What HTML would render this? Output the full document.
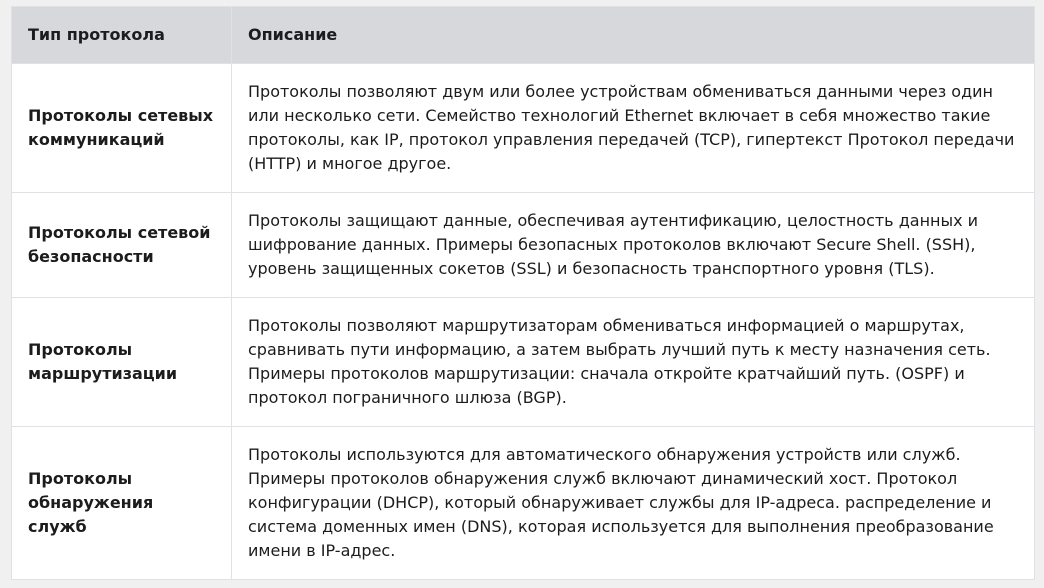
<!DOCTYPE html>
<html><head><meta charset="utf-8"><style>
html,body{margin:0;padding:0;background:#f0f0f0;width:1044px;height:588px;overflow:hidden}
table{position:absolute;left:11px;top:6px;width:1024px;border-collapse:collapse;background:#fff;font-family:"DejaVu Sans","Liberation Sans",sans-serif;font-size:16px;line-height:24px;color:#1c1c1e;table-layout:fixed}
td,th{border:1px solid #e0e1e4;padding:16px 10px 16px 16px;text-align:left;vertical-align:middle;white-space:nowrap;overflow:visible}
th{background:#d7d8dc;font-weight:bold;height:24px;font-size:16px}
td:first-child{font-weight:bold;font-size:16px}
td:last-child{vertical-align:top}
</style></head><body>
<table>
<colgroup><col style="width:220px"><col></colgroup>
<tr><th>Тип протокола</th><th>Описание</th></tr>
<tr style="height:129px"><td>Протоколы сетевых<br>коммуникаций</td><td>Протоколы позволяют двум или более устройствам обмениваться данными через один<br>или несколько сети. Семейство технологий Ethernet включает в себя множество такие<br>протоколы, как IP, протокол управления передачей (TCP), гипертекст Протокол передачи<br>(HTTP) и многое другое.</td></tr>
<tr style="height:105px"><td>Протоколы сетевой<br>безопасности</td><td>Протоколы защищают данные, обеспечивая аутентификацию, целостность данных и<br>шифрование данных. Примеры безопасных протоколов включают Secure Shell. (SSH),<br>уровень защищенных сокетов (SSL) и безопасность транспортного уровня (TLS).</td></tr>
<tr style="height:129px"><td>Протоколы<br>маршрутизации</td><td>Протоколы позволяют маршрутизаторам обмениваться информацией о маршрутах,<br>сравнивать пути информацию, а затем выбрать лучший путь к месту назначения сеть.<br>Примеры протоколов маршрутизации: сначала откройте кратчайший путь. (OSPF) и<br>протокол пограничного шлюза (BGP).</td></tr>
<tr style="height:153px"><td>Протоколы<br>обнаружения<br>служб</td><td>Протоколы используются для автоматического обнаружения устройств или служб.<br>Примеры протоколов обнаружения служб включают динамический хост. Протокол<br>конфигурации (DHCP), который обнаруживает службы для IP-адреса. распределение и<br>система доменных имен (DNS), которая используется для выполнения преобразование<br>имени в IP-адрес.</td></tr>
</table>
</body></html>
